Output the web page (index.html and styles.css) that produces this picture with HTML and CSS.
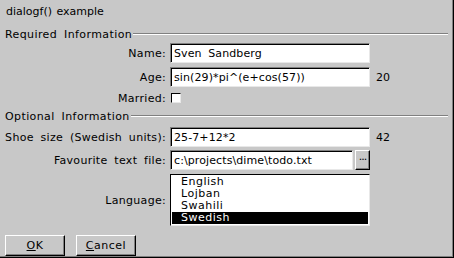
FILE: index.html
```html
<!DOCTYPE html>
<html lang="en">

<head>
  <meta charset="UTF-8">
  <title>dialogf() example</title>
  <link rel="stylesheet" href="styles.css">
</head>

<body>
  <div class="window">
    <div class="title">dialogf() example</div>

    <div class="section"><span>Required Information</span><div class="rule"></div></div>

    <div class="row row-name">
      <label class="label">Name:</label>
      <div class="field"><div class="edit">Sven Sandberg</div></div>
    </div>
    <div class="row row-age">
      <label class="label">Age:</label>
      <div class="field"><div class="edit">sin(29)*pi^(e+cos(57))</div></div>
      <span class="result">20</span>
    </div>
    <div class="row row-married">
      <label class="label">Married:</label>
      <div class="field"><div class="check"></div></div>
    </div>

    <div class="section section-opt"><span>Optional Information</span><div class="rule"></div></div>

    <div class="row row-shoe">
      <label class="label">Shoe size (Swedish units):</label>
      <div class="field"><div class="edit">25-7+12*2</div></div>
      <span class="result">42</span>
    </div>
    <div class="row row-file">
      <label class="label">Favourite text file:</label>
      <div class="field file-field">
        <div class="edit">c:\projects\dime\todo.txt</div>
        <div class="browse">...</div>
      </div>
    </div>
    <div class="row row-lang">
      <label class="label">Language:</label>
      <div class="field">
        <ul class="listbox">
          <li>English</li>
          <li>Lojban</li>
          <li>Swahili</li>
          <li class="selected">Swedish</li>
        </ul>
      </div>
    </div>

    <div class="buttons">
      <button class="btn"><u>O</u>K</button>
      <button class="btn"><u>C</u>ancel</button>
    </div>
  </div>
</body>

</html>
```

FILE: styles.css
```css
body,
html {
  margin: 0;
  padding: 0;
  width: 100%;
  height: 100%;
  overflow: hidden;
  font-family: "DejaVu Sans", Verdana, sans-serif;
  font-size: 11px;
  color: #000;
  word-spacing: 3px;
}

.window {
  width: 454px;
  height: 258px;
  box-sizing: border-box;
  background-color: #c8c8c8;
  border-right: 1px solid #000;
  border-bottom: 1px solid #000;
  box-shadow: inset -1px -1px 0 #808080;
  padding-left: 5px;
}

.title {
  height: 26px;
  padding-top: 5px;
  padding-left: 1px;
  box-sizing: border-box;
  line-height: 13px;
  word-spacing: 1px;
}

.section {
  display: flex;
  align-items: center;
  height: 14px;
  margin-top: 1px;
  letter-spacing: 0.4px;
}

.section .rule {
  flex: 1;
  height: 0;
  border-top: 1px solid #808080;
  border-bottom: 1px solid #fff;
  margin-left: 1px;
  margin-right: 5px;
}

.section-opt {
  margin-top: 3px;
}

.row {
  display: flex;
  align-items: center;
}

.label {
  width: 161px;
  text-align: right;
  margin-right: 4px;
  letter-spacing: 0.3px;
  white-space: nowrap;
}

.field {
  width: 200px;
  display: flex;
}

.row-name {
  margin-top: 2px;
  height: 20px;
}

.row-age {
  margin-top: 4px;
  height: 20px;
}

.row-married {
  margin-top: 3px;
  height: 16px;
}

.row-shoe {
  margin-top: 4px;
  height: 20px;
}

.row-file {
  margin-top: 3px;
  height: 20px;
}

.row-lang {
  margin-top: 4px;
  height: 52px;
}

.edit {
  flex: 1;
  height: 20px;
  box-sizing: border-box;
  background-color: #fff;
  border: 1px solid;
  border-color: #808080 #e8e8e8 #e8e8e8 #808080;
  box-shadow: inset 1px 1px 0 #000;
  padding: 3px 0 0 3px;
  line-height: 13px;
  letter-spacing: 0.1px;
  white-space: nowrap;
  overflow: hidden;
}

.result {
  margin-left: 6px;
  padding-top: 1px;
}

.check {
  width: 10px;
  height: 10px;
  margin-left: 1px;
  box-sizing: border-box;
  background-color: #fff;
  border: 1px solid;
  border-color: #000 #e8e8e8 #e8e8e8 #000;
}

.browse {
  width: 15px;
  height: 20px;
  margin-left: 2px;
  box-sizing: border-box;
  border: 1px solid;
  border-color: #fff #000 #000 #fff;
  box-shadow: inset -1px -1px 0 #808080;
  line-height: 12px;
  text-align: center;
  letter-spacing: -1px;
}

.listbox {
  list-style: none;
  margin: 0;
  padding: 1px;
  width: 200px;
  height: 52px;
  box-sizing: border-box;
  background-color: #fff;
  border: 1px solid;
  border-color: #000 #e8e8e8 #e8e8e8 #000;
  letter-spacing: 0.5px;
}

.listbox li {
  height: 12px;
  line-height: 12px;
  padding-left: 9px;
}

.listbox li.selected {
  background-color: #000;
  color: #fff;
}

.buttons {
  display: flex;
  gap: 11px;
  margin-top: 9px;
}

.btn {
  width: 60px;
  height: 21px;
  box-sizing: border-box;
  padding: 0;
  font-family: inherit;
  font-size: 11px;
  letter-spacing: 0.5px;
  background-color: #c8c8c8;
  border: 1px solid;
  border-color: #fff #000 #000 #fff;
  box-shadow: inset -1px -1px 0 #808080;
  color: #000;
}
```
